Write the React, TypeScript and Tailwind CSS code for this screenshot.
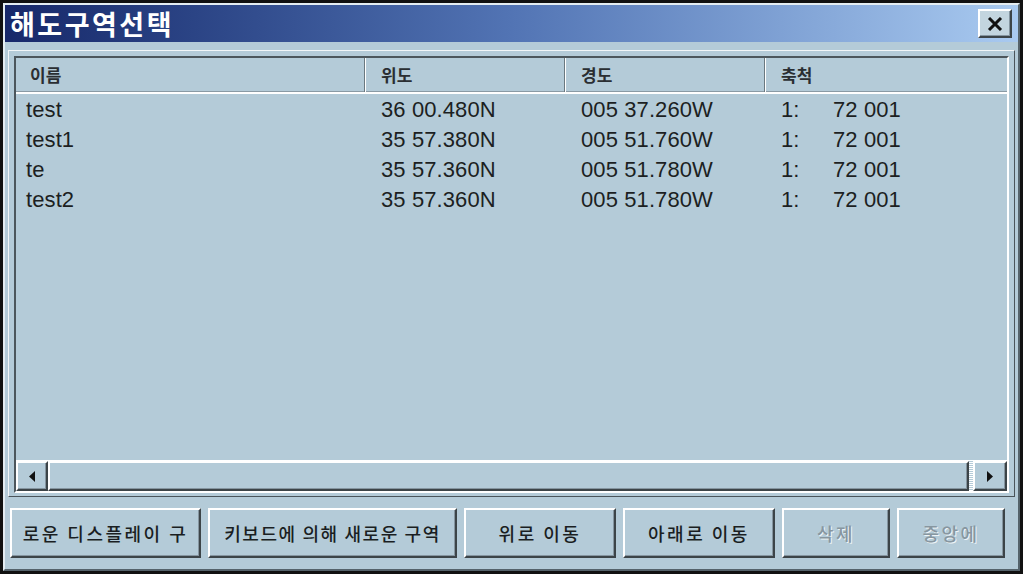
const rows = [
  { name: "test", lat: "36 00.480N", lon: "005 37.260W", scale: "72 001" },
  { name: "test1", lat: "35 57.380N", lon: "005 51.760W", scale: "72 001" },
  { name: "te", lat: "35 57.360N", lon: "005 51.780W", scale: "72 001" },
  { name: "test2", lat: "35 57.360N", lon: "005 51.780W", scale: "72 001" },
]

const raised =
  "border-2 border-t-white border-l-white border-r-[#3c4448] border-b-[#3c4448] shadow-[inset_-1px_-1px_0_#8595a0]"

function Btn({ label, w, disabled, tight }: { label: string; w: string; disabled?: boolean; tight?: boolean }) {
  return (
    <button
      className={`${w} h-[50px] ${raised} bg-[#b4cbd8] flex items-center justify-center overflow-hidden whitespace-nowrap text-[18px] font-medium font-['Noto_Sans_CJK_KR',sans-serif] ${
        tight ? "tracking-[1.6px]" : "tracking-[2.5px]"
      } ${disabled ? "text-[#8796a0] [text-shadow:1px_1px_0_#eef4f7]" : "text-[#1a1e22]"}`}
    >
      {label}
    </button>
  )
}

export default function App() {
  return (
    <div className="w-[1023px] h-[574px] border-[3px] border-[#111] bg-[#b4cbd8] font-['Liberation_Sans','Noto_Sans_CJK_KR',sans-serif]">
      <div className="h-full border-2 border-t-[#e4edf2] border-l-[#e4edf2] border-r-[#55636b] border-b-[#55636b] flex flex-col">

        {/* title bar */}
        <div className="h-[37px] shrink-0 bg-linear-to-r from-[#17286a] via-[#5274b4] to-[#a9caf0] flex items-center pl-[5px] pr-[6px]">
          <span className="text-white font-bold text-[27px] tracking-[2.5px] leading-none font-['Noto_Sans_CJK_KR',sans-serif]">
            해도구역선택
          </span>
          <button className={`ml-auto w-[34px] h-[29px] ${raised} bg-[#c3d5df] flex items-center justify-center`}>
            <svg width="16" height="14" viewBox="0 0 16 14">
              <path d="M2 1 L14 13 M14 1 L2 13" stroke="#111" strokeWidth="3" />
            </svg>
          </button>
        </div>

        {/* list frame */}
        <div className="mt-[8px] mx-[3px] h-[447px] shrink-0 border border-t-[#f2f6f8] border-l-[#f2f6f8] border-r-[#4a545a] border-b-[#4a545a] p-[5px] pb-[3px]">
          <div className="h-full border-2 border-t-[#4c565c] border-l-[#4c565c] border-r-white border-b-white flex flex-col">

            {/* header */}
            <div className="h-[36px] shrink-0 flex border-b-2 border-white shadow-[0_-1px_0_#8a9aa4_inset] text-[17px] font-bold text-[#2a2e32] font-['Noto_Sans_CJK_KR',sans-serif]">
              <div className="w-[349px] flex items-center pl-[14px] border-r border-[#6a7880]">이름</div>
              <div className="w-[200px] flex items-center pl-[15px] border-l border-white border-r border-r-[#6a7880]">위도</div>
              <div className="w-[200px] flex items-center pl-[15px] border-l border-white border-r border-r-[#6a7880]">경도</div>
              <div className="flex-1 flex items-center pl-[15px] border-l border-white">축척</div>
            </div>

            {/* rows */}
            <div className="flex-1 text-[22px] text-[#1c1f22] tracking-[0.1px]">
              {rows.map((r, i) => (
                <div key={i} className="h-[30px] flex items-center">
                  <div className="w-[349px] pl-[10px]">{r.name}</div>
                  <div className="w-[200px] pl-[16px]">{r.lat}</div>
                  <div className="w-[200px] pl-[16px]">{r.lon}</div>
                  <div className="flex-1 pl-[16px] flex">
                    <span className="w-[52px]">1:</span>
                    <span>{r.scale}</span>
                  </div>
                </div>
              ))}
            </div>

            {/* horizontal scrollbar */}
            <div className="h-[31px] shrink-0 flex border-t border-white">
              <div className={`w-[32px] ${raised} bg-[#b4cbd8] flex items-center justify-center`}>
                <svg width="6" height="11" viewBox="0 0 6 11"><path d="M6 0 L0 5.5 L6 11 Z" fill="#111" /></svg>
              </div>
              <div className={`flex-1 ${raised} bg-[#b4cbd8]`} />
              <div className="w-[4px] bg-[repeating-linear-gradient(0deg,#ffffff_0_1px,#b4cbd8_1px_2px)]" />
              <div className={`w-[34px] ${raised} bg-[#b4cbd8] flex items-center justify-center`}>
                <svg width="6" height="11" viewBox="0 0 6 11"><path d="M0 0 L6 5.5 L0 11 Z" fill="#111" /></svg>
              </div>
            </div>
          </div>
        </div>

        {/* buttons */}
        <div className="mt-[11px] ml-[5px] flex gap-[7px]">
          <Btn label="로운 디스플레이 구" w="w-[191px]" />
          <Btn label="키보드에 의해 새로운 구역" w="w-[249px]" tight />
          <Btn label="위로 이동" w="w-[152px]" />
          <Btn label="아래로 이동" w="w-[152px]" />
          <Btn label="삭제" w="w-[108px]" disabled />
          <Btn label="중앙에" w="w-[108px]" disabled />
        </div>
      </div>
    </div>
  )
}
